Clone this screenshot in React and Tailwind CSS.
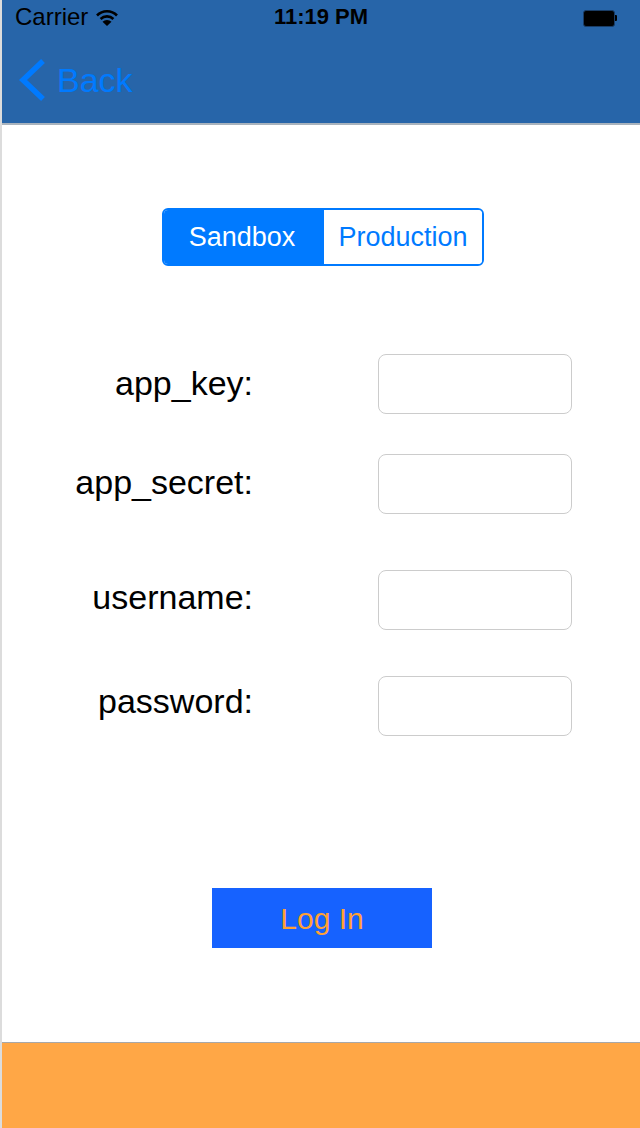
import React from 'react';

const fields = [
  { label: 'app_key:', mt: 'mt-[88px]', shift: '-translate-y-[1px]' },
  { label: 'app_secret:', mt: 'mt-[40px]', shift: '-translate-y-[2px]' },
  { label: 'username:', mt: 'mt-[56px]', shift: '-translate-y-[3px]' },
  { label: 'password:', mt: 'mt-[46px]', shift: '-translate-y-[5px]' },
];

const StatusBar = () => (
  <div className="h-[36px] flex items-center px-[13px] relative text-black">
    <span className="text-[24px] leading-none -translate-y-[1px]">Carrier</span>
    <svg className="ml-[8px] w-[22px] h-[18px]" viewBox="0 0 22 18">
      <path d="M1 6.5 A14 14 0 0 1 21 6.5" fill="none" stroke="#000" strokeWidth="2.6" />
      <path d="M4.6 10 A9 9 0 0 1 17.4 10" fill="none" stroke="#000" strokeWidth="2.6" />
      <path d="M11 17 L6.5 12.8 A6.5 6.5 0 0 1 15.5 12.8 Z" fill="#000" />
    </svg>
    <span className="absolute left-1/2 -translate-x-1/2 text-[22px] font-bold leading-none -translate-y-[1px]">
      11:19 PM
    </span>
    <div className="ml-auto flex items-center mr-[10px]">
      <div className="w-[32px] h-[17px] rounded-[3px] border border-[#1a3d66] bg-black" />
      <div className="w-[2px] h-[6px] bg-black rounded-r-[1px]" />
    </div>
  </div>
);

const App = () => {
  return (
    <div
      className="w-[640px] h-[1128px] flex flex-col bg-white border-l-2 border-[#dcdcdc] overflow-hidden"
      style={{ fontFamily: '"Liberation Sans", Arial, sans-serif' }}
    >
      <header className="bg-[#2765a9] h-[125px] flex flex-col border-b-2 border-[#a9b3bd]">
        <StatusBar />
        <div className="flex items-center h-[87px] pl-[16px]">
          <svg className="w-[28px] h-[44px]" viewBox="0 0 28 44">
            <path d="M25 3 L5 22 L25 41" fill="none" stroke="#007aff" strokeWidth="5.5" />
          </svg>
          <span className="ml-[11px] text-[34px] text-[#007aff] leading-none">Back</span>
        </div>
      </header>

      <main className="flex-1 flex flex-col">
        <div className="mt-[83px] self-start ml-[160px] flex w-[322px] h-[58px] rounded-[6px] border-2 border-[#007aff] overflow-hidden text-[27px]">
          <div className="w-[160px] bg-[#007aff] text-white flex items-center justify-center pr-[4px]">
            Sandbox
          </div>
          <div className="flex-1 bg-white text-[#007aff] flex items-center justify-center">
            Production
          </div>
        </div>

        {fields.map((f) => (
          <div key={f.label} className={`flex items-center ${f.mt}`}>
            <label className={`w-[251px] text-right text-[34px] text-black leading-none ${f.shift}`}>
              {f.label}
            </label>
            <div className="ml-[125px] w-[194px] h-[60px] rounded-[8px] border border-[#cccccc] bg-white" />
          </div>
        ))}

        <button className="mt-[152px] ml-[210px] w-[220px] h-[60px] bg-[#1662ff] text-[#ffa133] text-[30px]">
          Log In
        </button>
      </main>

      <footer className="h-[86px] bg-[#ffa746] border-t border-[#a8a8a8]" />
    </div>
  );
};

export default App;
